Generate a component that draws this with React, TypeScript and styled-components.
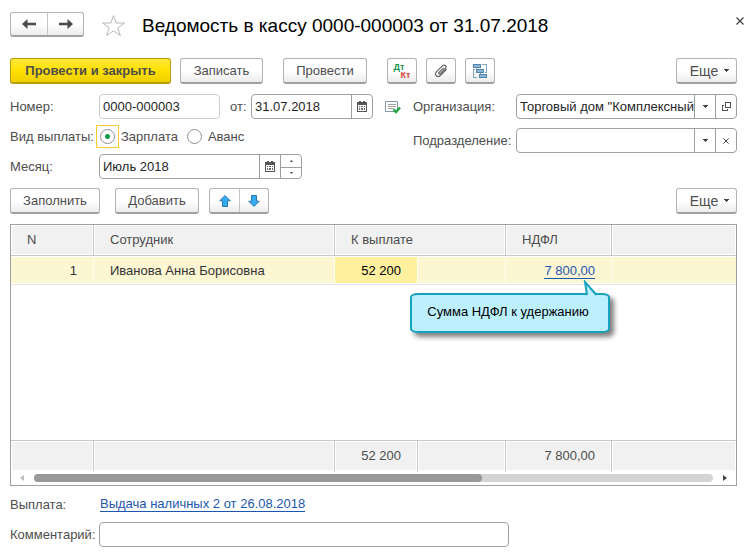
import React from 'react';
import styled, { createGlobalStyle, css } from 'styled-components';

const GlobalStyle = createGlobalStyle`
  *, *::before, *::after { box-sizing: border-box; }
  body { margin: 0; background: #fff; }
  body, button, input, table {
    font-family: "Liberation Sans", Arial, sans-serif;
    font-size: 13px;
    line-height: 16px;
    color: #4d4d4d;
  }
`;

const Page = styled.main`
  padding: 12px 15px 8px 10px;
`;

const TitleBar = styled.header`
  display: flex;
  align-items: flex-start;
  margin-right: -7px;
  height: 46px;
`;

const raised = css`
  border: 1px solid #b3b3b3;
  border-bottom: 2px solid #a0a0a0;
  border-radius: 3px;
  background: linear-gradient(#fff 50%, #ececec);
`;

const SplitButton = styled.div<{ $gap?: number }>`
  display: flex;
  margin-left: ${(p) => p.$gap ?? 0}px;
  ${raised}
`;

const SplitPart = styled.button<{ $w: number; $h: number }>`
  display: grid;
  place-items: center;
  width: ${(p) => p.$w}px;
  height: ${(p) => p.$h}px;
  padding: 0;
  border: 0;
  background: none;
  & + & { border-left: 1px solid #c4c4c4; }
`;

const PlainButton = styled.button`
  display: block;
  padding: 0;
  border: 0;
  background: none;
  svg { display: block; }
`;

const StarButton = styled(PlainButton)`
  margin: 2px 16px 0 17px;
`;

const Title = styled.h1`
  flex: 1;
  margin: 2px 0 0;
  font-size: 19px;
  line-height: 23px;
  font-weight: 400;
  color: #000;
  white-space: nowrap;
`;

const CloseButton = styled(PlainButton)`
  margin: 5px 0 0;
`;

const Toolbar = styled.div`
  display: flex;
  align-items: center;
  height: 26px;
`;

const Button = styled.button<{ $w: number; $primary?: boolean; $gap?: number }>`
  display: flex;
  align-items: center;
  justify-content: center;
  gap: 6px;
  width: ${(p) => p.$w}px;
  height: 26px;
  margin: 0 0 0 ${(p) => p.$gap ?? 0}px;
  padding: 0;
  white-space: nowrap;
  ${raised}
  ${(p) =>
    p.$primary &&
    css`
      border-color: #b79d0c;
      background: linear-gradient(#ffe83a, #ffe000 50%, #efcf00);
      font-weight: 700;
    `}
`;

const MoreButton = styled(Button)`
  margin-left: auto;
  padding-left: 6px;
  font-size: 14px;
`;

const Form = styled.form`
  display: grid;
  grid-template-columns: 403px minmax(0, 1fr);
  margin: 10px 0 9px;
`;

const FieldColumn = styled.div<{ $gap: number }>`
  display: flex;
  flex-direction: column;
  gap: ${(p) => p.$gap}px;
`;

const FieldRow = styled.div`
  display: flex;
  align-items: center;
  height: 25px;
`;

const labelStyle = css<{ $w: number }>`
  flex: none;
  width: ${(p) => p.$w}px;
  white-space: nowrap;
`;

const Label = styled.label<{ $w: number; $indent?: boolean }>`
  ${labelStyle}
  padding-left: ${(p) => (p.$indent ? 10 : 0)}px;
`;

const Caption = styled.span<{ $w: number }>`
  ${labelStyle}
`;

const Field = styled.div<{ $w?: number; $muted?: boolean }>`
  display: flex;
  flex: ${(p) => (p.$w ? 'none' : '1')};
  width: ${(p) => (p.$w ? p.$w + 'px' : 'auto')};
  min-width: 0;
  height: 25px;
  border: 1px solid ${(p) => (p.$muted ? '#cfcfcf' : '#a0a0a0')};
  border-radius: 4px;
  background: #fff;
  overflow: hidden;
`;

const TextInput = styled.input`
  flex: 1;
  min-width: 0;
  width: 0;
  padding: 0 0 0 3px;
  border: 0;
  outline: 0;
  background: none;
  color: #262626;
`;

const FieldButton = styled.button`
  display: grid;
  place-items: center;
  width: 21px;
  padding: 0;
  border: 0;
  border-left: 1px solid #a0a0a0;
  background: none;
`;

const Spinner = styled.div`
  display: grid;
  grid-template-rows: 1fr 1fr;
  width: 21px;
  border-left: 1px solid #a0a0a0;
`;

const SpinButton = styled.button`
  display: grid;
  place-items: center;
  padding: 0;
  border: 0;
  background: none;
  & + & { border-top: 1px solid #a0a0a0; }
`;

const StatusIcon = styled.span`
  display: block;
  margin-left: 12px;
  svg { display: block; }
`;

const RadioFrame = styled.span<{ $active?: boolean }>`
  display: grid;
  place-items: center;
  width: 23px;
  height: 23px;
  border: 1px solid ${(p) => (p.$active ? '#f9cb2d' : 'transparent')};
`;

const Radio = styled.input`
  appearance: none;
  width: 15px;
  height: 15px;
  margin: 0;
  border: 1px solid #929292;
  border-radius: 50%;
  background: #fff;
  outline: 0;
  &:checked { background: radial-gradient(circle, #109a45 2px, #fff 3px); }
`;

const RadioLabel = styled.label`
  margin: 0 5px 0 2px;
`;

const Grid = styled.section`
  margin-top: 10px;
  border: 1px solid #a0a0a0;
`;

const Table = styled.table`
  width: 100%;
  table-layout: fixed;
  border-collapse: separate;
  border-spacing: 0;
`;

const Col = styled.col<{ $w?: number }>`
  width: ${(p) => (p.$w ? p.$w + 'px' : 'auto')};
`;

const HeadCell = styled.th`
  height: 31px;
  padding: 0 16px;
  border-right: 1px solid #c8c8c8;
  border-bottom: 1px solid #c8c8c8;
  background: #f1f1f1;
  box-shadow: inset 0 0 0 1px #fff;
  font-weight: 400;
  text-align: left;
  &:last-child { border-right: 0; }
`;

const Cell = styled.td<{ $num?: boolean; $current?: boolean }>`
  position: relative;
  height: 29px;
  padding: 2px 16px 0;
  border-right: 1px solid #fffdf0;
  border-bottom: 1px solid #e4e4e4;
  background: ${(p) => (p.$current ? '#fff0a0' : '#fdf6d3')};
  box-shadow: inset 0 1px #fff, inset 0 -1px #fff;
  color: ${(p) => (p.$current ? '#000' : '#333')};
  text-align: ${(p) => (p.$num ? 'right' : 'left')};
  white-space: nowrap;
  &:last-child { border-right: 0; }
`;

const EmptyArea = styled.td`
  height: 155px;
  padding: 0;
`;

const FootCell = styled.td`
  height: 31px;
  padding: 0 16px;
  border-top: 1px solid #c8c8c8;
  border-right: 1px solid #c8c8c8;
  background: #f1f1f1;
  box-shadow: inset 0 0 0 1px #fff;
  text-align: right;
  &:last-child { border-right: 0; }
`;

const Link = styled.a`
  display: inline-block;
  line-height: 14px;
  border-bottom: 1px solid #1d56b0;
  color: #1d56b0;
  text-decoration: none;
`;

const Callout = styled.div`
  position: absolute;
  z-index: 1;
  top: 37px;
  right: 1px;
  width: 200px;
  padding: 9px 4px 11px 0;
  border: 2px solid #17a3bf;
  border-radius: 8px / 4px;
  background: #bdf0fe;
  box-shadow: 4px 4px 5px rgba(0, 0, 0, 0.5);
  color: #000;
  text-align: center;
`;

const CalloutTail = styled.svg`
  position: absolute;
  top: -15px;
  right: 8px;
`;

const ScrollBar = styled.div`
  display: flex;
  align-items: center;
  justify-content: space-between;
  height: 14px;
  padding: 0 9px;
`;

const ScrollTrack = styled.div`
  flex: 1;
  height: 8px;
  margin: 0 10px;
  border-radius: 4px;
  background: #d4d4d4;
`;

const ScrollThumb = styled.div`
  width: 66%;
  height: 8px;
  border-radius: 4px;
  background: #999;
`;

const Footer = styled.footer`
  display: flex;
  flex-direction: column;
  gap: 5px;
  margin-top: 6px;
`;

const NavArrow = ({ flip }: { flip?: boolean }) => (
  <svg width="14" height="10" viewBox="0 0 14 10">
    <path
      d={flip ? 'M14 5 8.5 0v3.7H0v2.6h8.5V10z' : 'M0 5 5.5 0v3.7H14v2.6H5.5V10z'}
      fill="#4a4a4a"
    />
  </svg>
);

const Caret = () => (
  <svg width="5" height="3" viewBox="0 0 5 3" shapeRendering="crispEdges">
    <path d="M0 0h5v1H0zM1 1h3v1H1zM2 2h1v1H2z" fill="#444" />
  </svg>
);

const Calendar = () => (
  <svg width="10" height="11" viewBox="0 0 10 11" shapeRendering="crispEdges">
    <path d="M0 2h10v9H0z" fill="#fff" />
    <path d="M0 1h10v3H0zM0 4h1v7H0zM9 4h1v7H9zM1 10h8v1H1zM2 0h2v1H2zM6 0h2v1H6z" fill="#555" />
    <path d="M2 5h1v1H2zM4 5h2v1H4zM7 5h1v1H7zM2 7h1v2H2zM4 7h2v2H4zM7 7h1v2H7z" fill="#666" />
  </svg>
);

const BlueArrow = ({ down }: { down?: boolean }) => (
  <svg width="12" height="12" viewBox="0 0 12 12">
    <path
      d={down ? 'M6 11.5.7 6.2h2.8V.5h5v5.7h2.8z' : 'M6 .5.7 5.8h2.8v5.7h5V5.8h2.8z'}
      fill="#35abf2"
      stroke="#2b78ab"
    />
  </svg>
);

const EntryMark = styled.span`
  display: grid;
  grid-template-rows: 8px 8px;
  width: 17px;
  font-size: 9px;
  line-height: 8px;
  font-weight: 700;
`;

const Debit = styled.span`
  color: #149447;
  text-align: left;
`;

const Credit = styled.span`
  color: #d24436;
  text-align: right;
`;

const Clip = () => (
  <svg width="14" height="14" viewBox="0 0 14 14" fill="none" stroke="#666" strokeWidth="1.2" strokeLinecap="round">
    <path d="M9.300 4.200 5 8.500c-1 1.100.3 2.200 1.300 1.200l5-5.200c2-2.300-.7-4.700-2.900-2.600L2.600 7.600c-2.900 3.100.6 6.700 3.700 3.900l5.900-6" />
  </svg>
);

const Structure = () => (
  <svg width="16" height="16" viewBox="0 0 16 16" shapeRendering="crispEdges">
    <path d="M3 6.500H1.500v8H5M10 1.500h4.500v8H13M4.500 4v3M8.500 9v3" fill="none" stroke="#7fa5bf" />
    <path d="M1.500 1.500h7v3h-7zM4.500 6.500h7v3h-7zM7.500 11.500h7v3h-7z" fill="#8eb7d6" stroke="#5484a8" />
  </svg>
);

const Posted = () => (
  <svg width="16" height="14" viewBox="0 0 16 14">
    <path d="M.5 1.500h12v10H.5z" fill="#fff" stroke="#8499aa" />
    <path d="M3 4.500h8M3 6.500h8M3 8.500h6" stroke="#a0a0a0" />
    <path d="m8.500 9.500 2.500 2.500 4-4.500" fill="none" stroke="#22a64a" strokeWidth="2.500" />
  </svg>
);

const Cross = ({ size }: { size: number }) => (
  <svg width={size} height={size} viewBox="0 0 8 8">
    <path d="m.5.5 7 7m0-7-7 7" stroke="#444" strokeWidth="1.300" />
  </svg>
);

const OpenIcon = () => (
  <svg width="9" height="9" viewBox="0 0 9 9" fill="none" stroke="#555" shapeRendering="crispEdges">
    <path d="M3.500.5h5v5h-5zM2 3.500H.5v5h5V7" />
  </svg>
);

export default function App() {
  return (
    <>
      <GlobalStyle />
      <Page>
        <TitleBar>
          <SplitButton>
            <SplitPart $w={36} $h={22} aria-label="Назад"><NavArrow /></SplitPart>
            <SplitPart $w={36} $h={22} aria-label="Вперед"><NavArrow flip /></SplitPart>
          </SplitButton>
          <StarButton aria-label="В избранное">
            <svg width="25" height="23" viewBox="0 0 25 23">
              <path
                d="m12.500 1.500 2.600 7.500h8.400l-6.700 4.900 2.500 7.600-6.800-4.700-6.800 4.700 2.500-7.600L1.500 9h8.400z"
                fill="#fff"
                stroke="#b4b8bc"
              />
            </svg>
          </StarButton>
          <Title>Ведомость в кассу 0000-000003 от 31.07.2018</Title>
          <CloseButton aria-label="Закрыть"><Cross size={8} /></CloseButton>
        </TitleBar>

        <Toolbar>
          <Button $w={161} $primary>Провести и закрыть</Button>
          <Button $w={83} $gap={9}>Записать</Button>
          <Button $w={84} $gap={20}>Провести</Button>
          <Button $w={30} $gap={20} aria-label="Проводки">
            <EntryMark>
              <Debit>Дт</Debit>
              <Credit>Кт</Credit>
            </EntryMark>
          </Button>
          <Button $w={30} $gap={9} aria-label="Файлы"><Clip /></Button>
          <Button $w={30} $gap={9} aria-label="Структура"><Structure /></Button>
          <MoreButton $w={61}>Еще <Caret /></MoreButton>
        </Toolbar>

        <Form>
          <FieldColumn $gap={5}>
            <FieldRow>
              <Label $w={89} htmlFor="number">Номер:</Label>
              <Field $w={121} $muted><TextInput id="number" defaultValue="0000-000003" /></Field>
              <Label $w={31} $indent htmlFor="date">от:</Label>
              <Field $w={122}>
                <TextInput id="date" defaultValue="31.07.2018" />
                <FieldButton type="button" aria-label="Выбрать дату"><Calendar /></FieldButton>
              </Field>
              <StatusIcon><Posted /></StatusIcon>
            </FieldRow>
            <FieldRow role="radiogroup" aria-labelledby="kind">
              <Caption $w={86} id="kind">Вид выплаты:</Caption>
              <RadioFrame $active><Radio type="radio" name="kind" id="salary" defaultChecked /></RadioFrame>
              <RadioLabel htmlFor="salary">Зарплата</RadioLabel>
              <RadioFrame><Radio type="radio" name="kind" id="advance" /></RadioFrame>
              <RadioLabel htmlFor="advance">Аванс</RadioLabel>
            </FieldRow>
            <FieldRow>
              <Label $w={89} htmlFor="month">Месяц:</Label>
              <Field $w={203}>
                <TextInput id="month" defaultValue="Июль 2018" />
                <FieldButton type="button" aria-label="Выбрать месяц"><Calendar /></FieldButton>
                <Spinner>
                  <SpinButton type="button" aria-label="Следующий месяц">
                    <svg width="3" height="2" viewBox="0 0 3 2"><path d="M0 2h3L1.500 0z" fill="#444" /></svg>
                  </SpinButton>
                  <SpinButton type="button" aria-label="Предыдущий месяц">
                    <svg width="3" height="2" viewBox="0 0 3 2"><path d="M0 0h3L1.500 2z" fill="#444" /></svg>
                  </SpinButton>
                </Spinner>
              </Field>
            </FieldRow>
          </FieldColumn>
          <FieldColumn $gap={9}>
            <FieldRow>
              <Label $w={103} htmlFor="org">Организация:</Label>
              <Field>
                <TextInput id="org" defaultValue={'Торговый дом "Комплексный'} />
                <FieldButton type="button" aria-label="Выбрать организацию"><Caret /></FieldButton>
                <FieldButton type="button" aria-label="Открыть организацию"><OpenIcon /></FieldButton>
              </Field>
            </FieldRow>
            <FieldRow>
              <Label $w={103} htmlFor="dept">Подразделение:</Label>
              <Field>
                <TextInput id="dept" />
                <FieldButton type="button" aria-label="Выбрать подразделение"><Caret /></FieldButton>
                <FieldButton type="button" aria-label="Очистить"><Cross size={6} /></FieldButton>
              </Field>
            </FieldRow>
          </FieldColumn>
        </Form>

        <Toolbar>
          <Button $w={90}>Заполнить</Button>
          <Button $w={84} $gap={15}>Добавить</Button>
          <SplitButton $gap={10}>
            <SplitPart $w={29} $h={23} aria-label="Вверх"><BlueArrow /></SplitPart>
            <SplitPart $w={29} $h={23} aria-label="Вниз"><BlueArrow down /></SplitPart>
          </SplitButton>
          <MoreButton $w={61}>Еще <Caret /></MoreButton>
        </Toolbar>

        <Grid>
          <Table>
            <colgroup>
              <Col $w={83} />
              <Col $w={241} />
              <Col $w={83} />
              <Col $w={88} />
              <Col $w={106} />
              <Col />
            </colgroup>
            <thead>
              <tr>
                <HeadCell>N</HeadCell>
                <HeadCell>Сотрудник</HeadCell>
                <HeadCell colSpan={2}>К выплате</HeadCell>
                <HeadCell>НДФЛ</HeadCell>
                <HeadCell />
              </tr>
            </thead>
            <tbody>
              <tr>
                <Cell $num>1</Cell>
                <Cell>Иванова Анна Борисовна</Cell>
                <Cell $num $current>52 200</Cell>
                <Cell />
                <Cell $num>
                  <Link href="#tax">7 800,00</Link>
                  <Callout role="tooltip">
                    Сумма НДФЛ к удержанию
                    <CalloutTail width="18" height="17" viewBox="0 0 18 17">
                      <path d="M5 17V14.500L3 1.500 14 14.500V17z" fill="#bdf0fe" />
                      <path d="M5 15 3 2l11.500 13" fill="none" stroke="#17a3bf" strokeWidth="2" />
                    </CalloutTail>
                  </Callout>
                </Cell>
                <Cell />
              </tr>
              <tr><EmptyArea colSpan={6} /></tr>
            </tbody>
            <tfoot>
              <tr>
                <FootCell />
                <FootCell />
                <FootCell>52 200</FootCell>
                <FootCell />
                <FootCell>7 800,00</FootCell>
                <FootCell />
              </tr>
            </tfoot>
          </Table>
          <ScrollBar>
            <PlainButton aria-label="Прокрутить влево">
              <svg width="4" height="6" viewBox="0 0 4 6"><path d="M4 0v6L0 3z" fill="#bbb" /></svg>
            </PlainButton>
            <ScrollTrack><ScrollThumb /></ScrollTrack>
            <PlainButton aria-label="Прокрутить вправо">
              <svg width="4" height="6" viewBox="0 0 4 6"><path d="M0 0v6l4-3z" fill="#444" /></svg>
            </PlainButton>
          </ScrollBar>
        </Grid>

        <Footer>
          <FieldRow>
            <Caption $w={90}>Выплата:</Caption>
            <Link href="#payment">Выдача наличных 2 от 26.08.2018</Link>
          </FieldRow>
          <FieldRow>
            <Label $w={89} htmlFor="comment">Комментарий:</Label>
            <Field $w={410}><TextInput id="comment" /></Field>
          </FieldRow>
        </Footer>
      </Page>
    </>
  );
}
